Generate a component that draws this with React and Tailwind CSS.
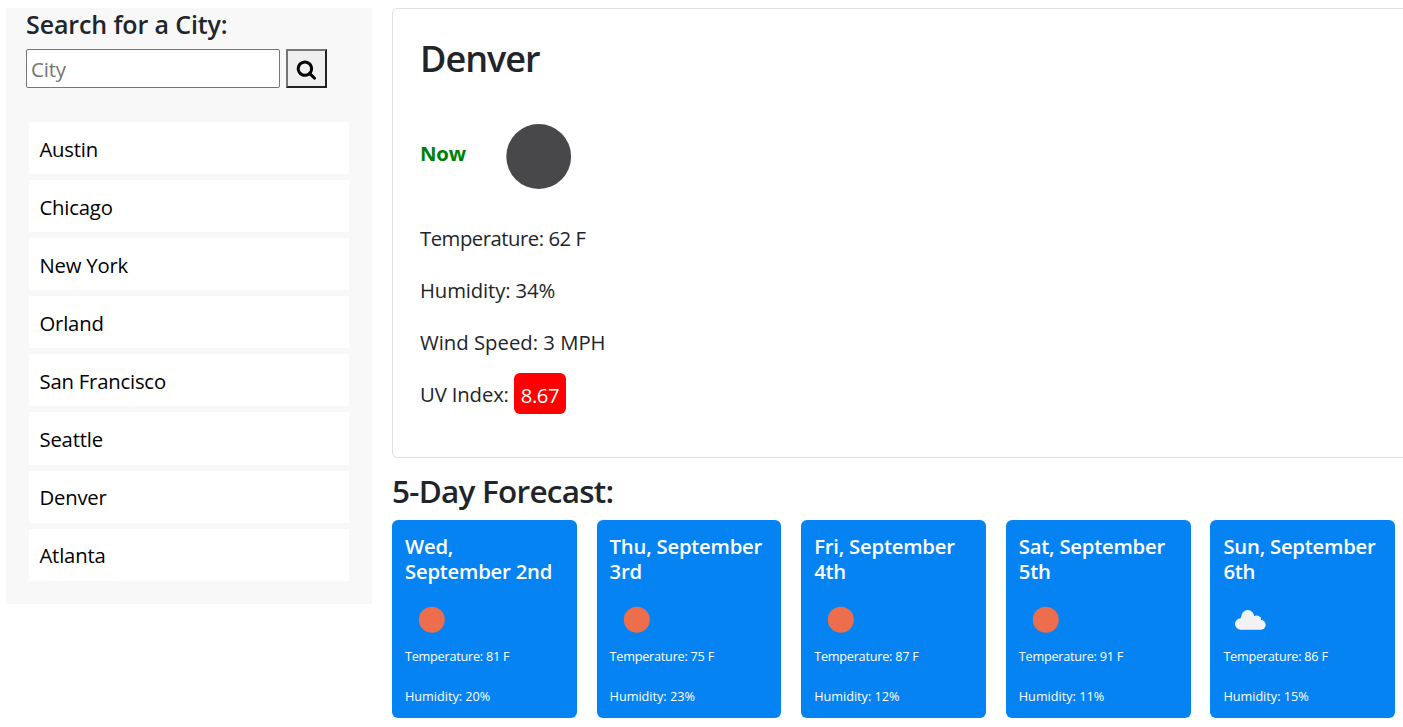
const cities = ["Austin", "Chicago", "New York", "Orland", "San Francisco", "Seattle", "Denver", "Atlanta"];

const days = [
  { top: "Wed,", bottom: "September 2nd", icon: "sun", temp: 81, humidity: 20 },
  { top: "Thu, September", bottom: "3rd", icon: "sun", temp: 75, humidity: 23 },
  { top: "Fri, September", bottom: "4th", icon: "sun", temp: 87, humidity: 12 },
  { top: "Sat, September", bottom: "5th", icon: "sun", temp: 91, humidity: 11 },
  { top: "Sun, September", bottom: "6th", icon: "cloud", temp: 86, humidity: 15 },
];

function SearchIcon() {
  return (
    <svg className="h-[20.8px] w-[20.8px]" viewBox="0 0 1792 1792" fill="currentColor">
      <path d="M1216 832q0-185-131.5-316.5t-316.5-131.5-316.5 131.5-131.5 316.5 131.5 316.5 316.5 131.5 316.5-131.5 131.5-316.5zm512 832q0 52-38 90t-90 38q-54 0-90-38l-343-342q-179 124-399 124-143 0-273.5-55.5t-225-150-150-225-55.5-273.5 55.5-273.5 150-225 225-150 273.5-55.5 273.5 55.5 225 150 150 225 55.5 273.5q0 220-124 399l343 343q37 37 37 90z" />
    </svg>
  );
}

function DayIcon({ type }) {
  return (
    <svg className="mt-[9px] block h-[52px] w-[52px]" viewBox="0 0 52 52">
      {type === "sun" ? (
        <circle cx="26.8" cy="26.8" r="13" fill="#ec6e4c" />
      ) : (
        <g fill="#f2f2f2">
          <circle cx="17.700" cy="31" r="5.700" />
          <circle cx="24.700" cy="23.500" r="6.400" />
          <circle cx="33.500" cy="26.700" r="4.100" />
          <circle cx="37.900" cy="31.900" r="4.800" />
          <rect x="17.700" y="24" width="20.200" height="12.700" rx="1" />
        </g>
      )}
    </svg>
  );
}

function Sidebar() {
  return (
    <aside className="h-[596px] w-[366px] shrink-0 bg-[#f8f8f8] pl-5">
      <h2 className="h-[41px] whitespace-nowrap text-[25px] leading-[32px] font-semibold tracking-[-0.12px]">Search for a City:</h2>
      <div className="flex h-[39px] gap-[6px]">
        <input
          className="h-[39px] w-[254px] rounded-[2px] border border-[#767676] bg-white px-1 text-[20.5px] tracking-[-0.2px] text-black placeholder:text-[#757575]"
          placeholder="City"
        />
        <button className="flex h-[39px] w-[41px] items-center justify-center border-2 border-t-[#767676] border-r-[#212121] border-b-[#212121] border-l-[#767676] bg-[#efefef] pt-[2px] text-black">
          <SearchIcon />
        </button>
      </div>
      <ul className="mt-[34px] ml-[3px] flex w-[320px] flex-col gap-[6px]">
        {cities.map((city) => (
          <li key={city} className="h-[52.1px] bg-white pt-[11.5px] pl-[10.5px] text-[20.3px] leading-[31px] tracking-[-0.2px] text-black">
            {city}
          </li>
        ))}
      </ul>
    </aside>
  );
}

function Current() {
  return (
    <section className="h-[450px] w-[1030px] rounded-[5px] border border-[#dfdfdf] pl-[27px]">
      <h1 className="h-[98px] pt-[28px] text-[36px] leading-[44px] font-semibold tracking-[-1px]">Denver</h1>
      <div className="flex h-[115px] items-start">
        <span className="w-[86px] pt-[31px] text-[20.3px] leading-[31px] font-bold tracking-[-0.2px] text-[#008000]">Now</span>
        <svg className="mt-[17px] h-[66px] w-[66px]" viewBox="0 0 66 66">
          <circle cx="32.700" cy="32.500" r="32.400" fill="#48484a" />
        </svg>
      </div>
      <div className="text-[20.3px] leading-[31px]">
        <p className="h-[52px] pt-[1px] tracking-[-0.48px]">Temperature: 62 F</p>
        <p className="h-[52px] pt-[1px] tracking-[-0.13px]">Humidity: 34%</p>
        <p className="h-[52px] pt-[1px]">Wind Speed: 3 MPH</p>
        <div className="flex">
          <p className="w-[94px] pt-[1px] whitespace-nowrap tracking-[-0.13px]">UV Index:</p>
          <span className="-mt-[5px] h-[41px] w-[52px] rounded-[6px] bg-[#ff0000] pt-[7px] text-center tracking-[-0.4px] text-white">8.67</span>
        </div>
      </div>
    </section>
  );
}

export default function App() {
  return (
    <div className="flex h-[727px] w-full gap-5 overflow-hidden bg-white pt-2 pl-[6px] font-['Open_Sans','Noto_Sans',sans-serif] text-[#212529]">
      <Sidebar />
      <main className="w-[1011px] shrink-0">
        <Current />
        <h2 className="h-[62px] pt-[13px] text-[31.5px] leading-[40px] font-semibold tracking-[-0.75px]">5-Day Forecast:</h2>
        <div className="grid w-[1003.2px] grid-cols-5 gap-[19.8px] text-white">
          {days.map((day) => (
            <article key={day.bottom} className="h-[198px] rounded-[6px] bg-[#0583f2] pl-[13px]">
              <h3 className="pt-[14px] text-[20.3px] leading-[25px] font-semibold tracking-[-0.22px] whitespace-nowrap">
                {day.top}
                <br />
                {day.bottom}
              </h3>
              <DayIcon type={day.icon} />
              <p className="mt-[1px] h-[40px] text-[12.7px] leading-[20px] tracking-[-0.25px]">Temperature: {day.temp} F</p>
              <p className="text-[12.7px] leading-[20px] tracking-[-0.02px]">Humidity: {day.humidity}%</p>
            </article>
          ))}
        </div>
      </main>
    </div>
  );
}
